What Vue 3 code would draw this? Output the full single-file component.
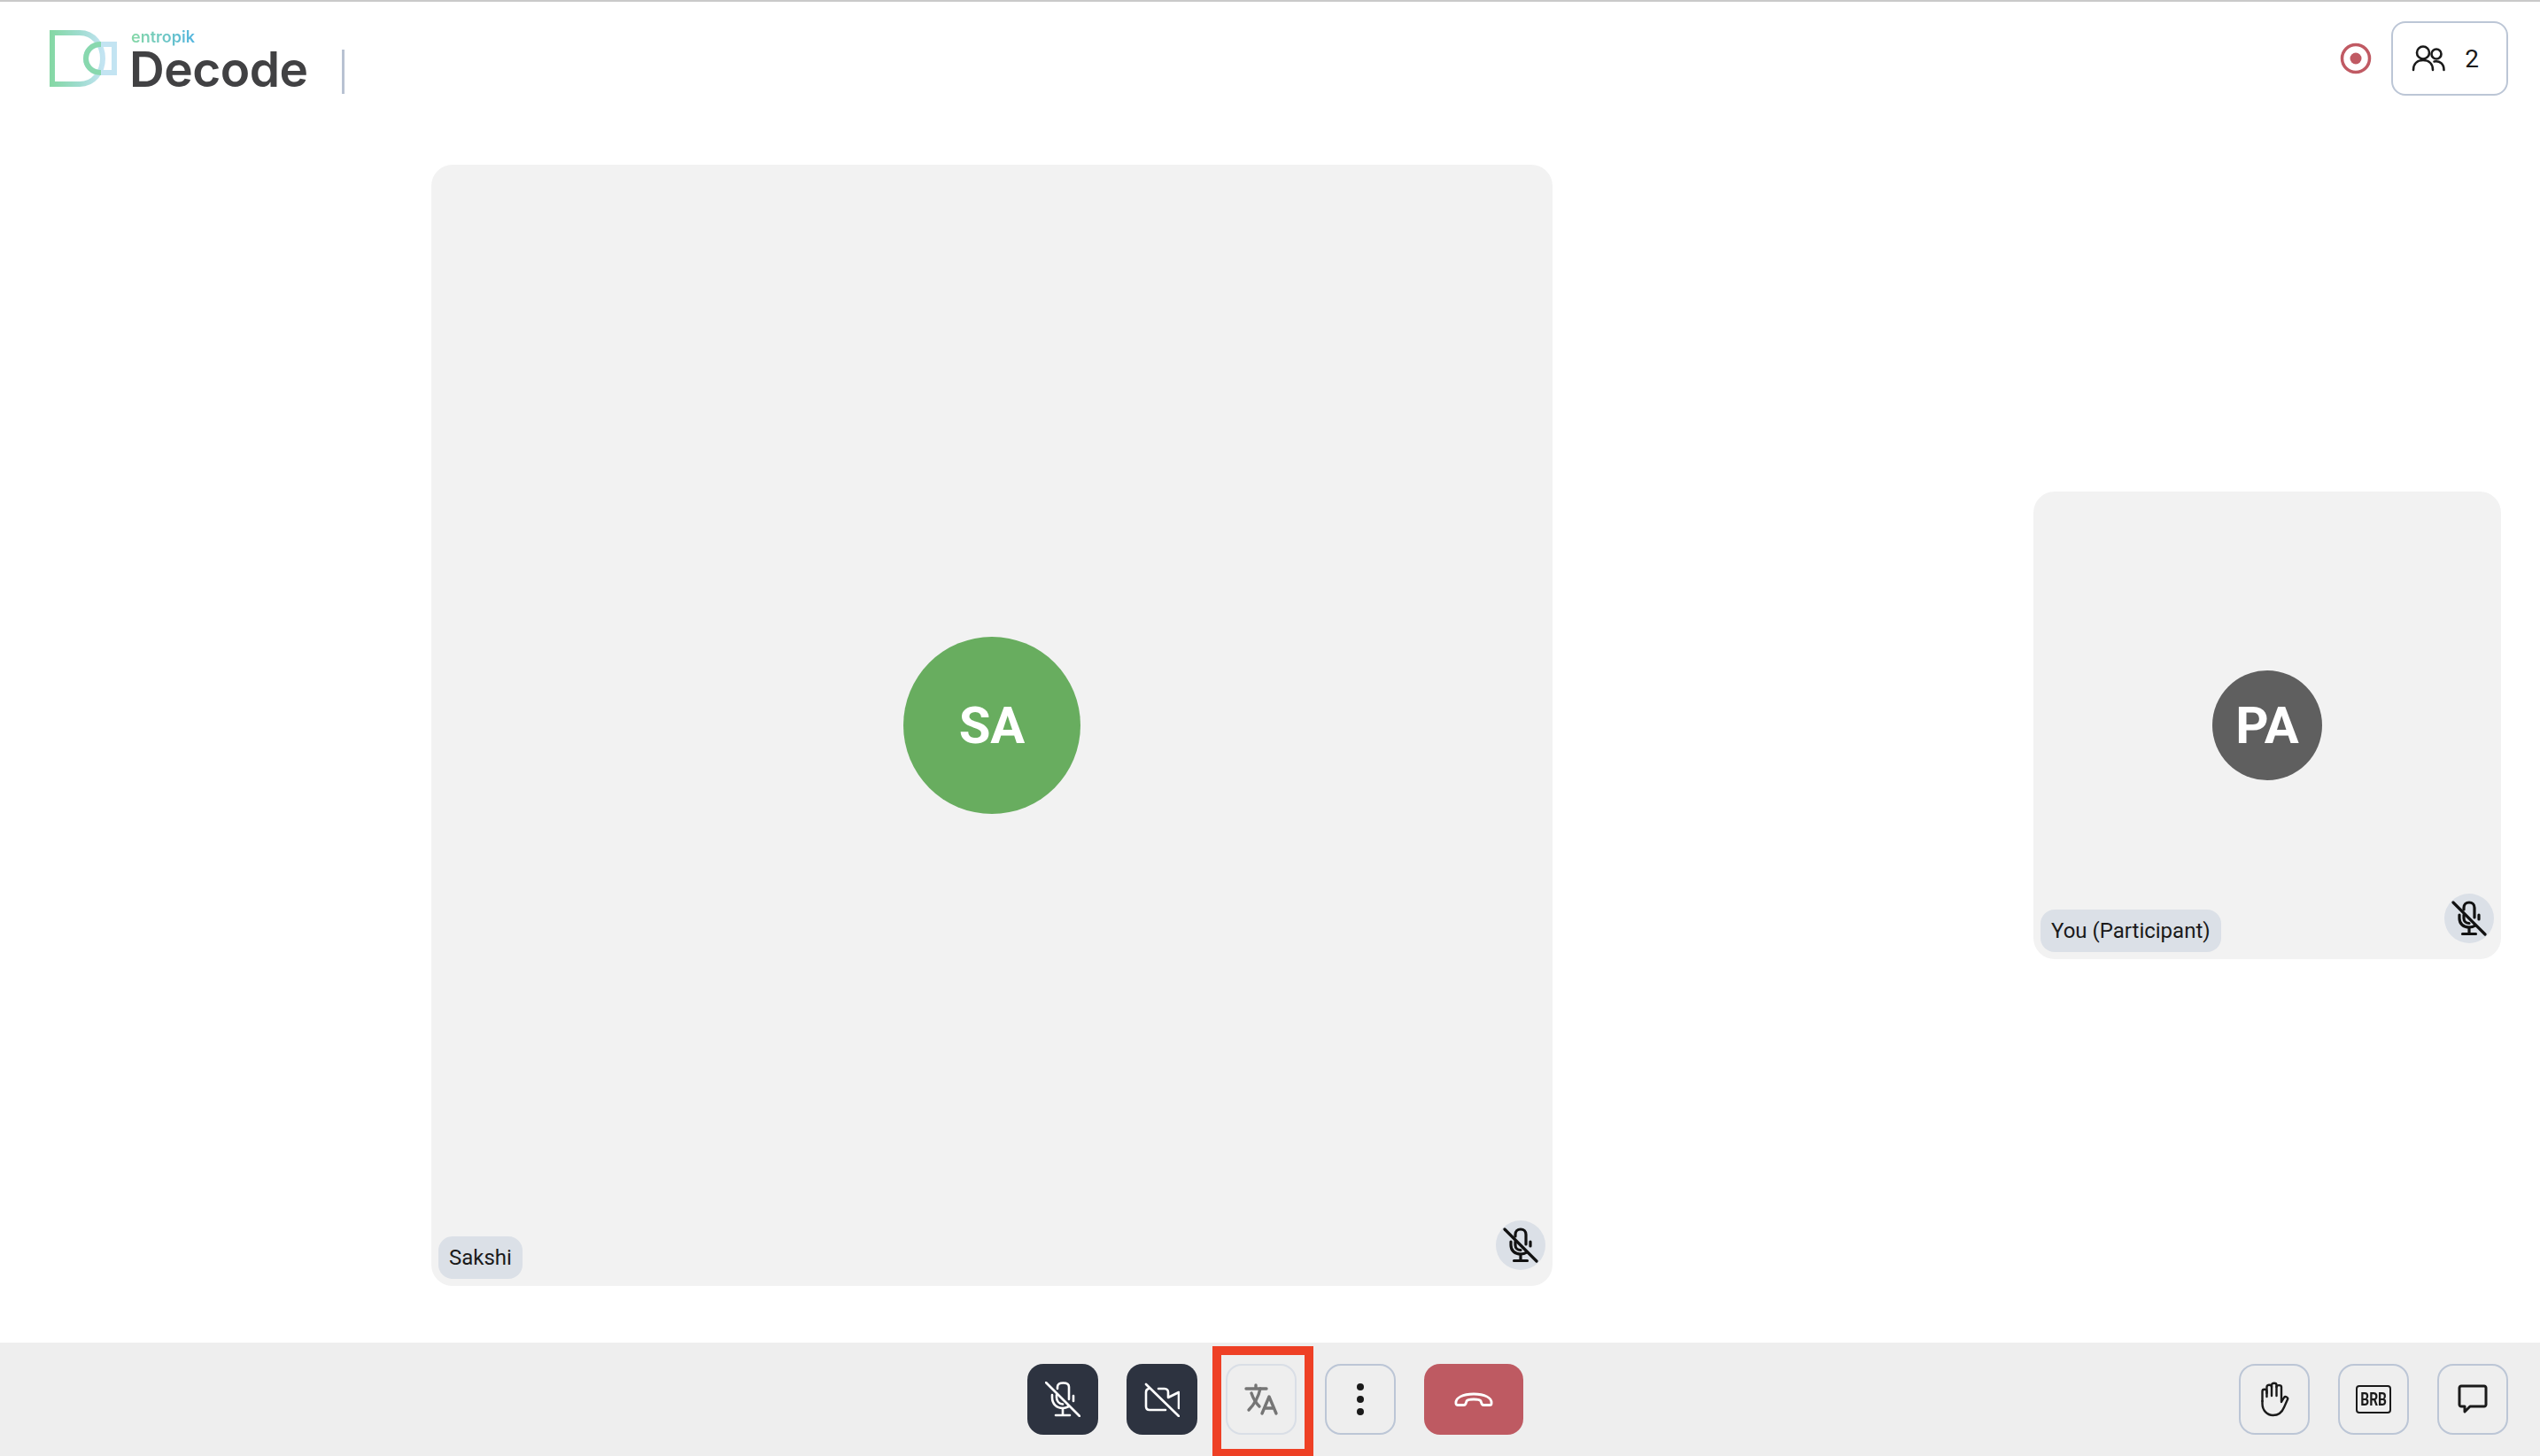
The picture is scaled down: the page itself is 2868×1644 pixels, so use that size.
<template>
  <div class="page">
    <header class="topbar">
      <div class="brand">
        <svg class="logo-mark" width="80" height="68" viewBox="0 0 80 68" fill="none">
          <defs>
            <linearGradient id="markGrad" x1="0" y1="0" x2="1" y2="0">
              <stop offset="0" stop-color="#86d8a6" />
              <stop offset="0.55" stop-color="#9fdcd0" />
              <stop offset="1" stop-color="#c3e4f2" />
            </linearGradient>
          </defs>
          <path d="M3 5H34C50 5 60 19 60 34S50 63 34 63H3Z" stroke="url(#markGrad)" stroke-width="6" />
          <path d="M73 18H58C47 18 41 26 41 34S47 50 58 50H73Z" stroke="#c3e4f2" stroke-width="6" />
          <path d="M58 18C47 18 41 26 41 34S47 50 58 50" stroke="#88d8ae" stroke-width="6" />
        </svg>
        <div class="brand-text">
          <span class="brand-parent">entropik</span>
          <span class="brand-name">Decode</span>
        </div>
        <span class="brand-divider"></span>
      </div>
      <div class="top-actions">
        <svg width="36" height="36" viewBox="0 0 36 36" fill="none">
          <circle cx="18" cy="18" r="15.5" stroke="#c05a63" stroke-width="3.5" />
          <circle cx="18" cy="18" r="6.5" fill="#c05a63" />
        </svg>
        <button class="people-btn">
          <svg width="38" height="32" viewBox="0 0 38 32" fill="none" stroke="#1a1a1a" stroke-width="2.6" stroke-linecap="round">
            <circle cx="13" cy="9.5" r="7" />
            <circle cx="28" cy="11" r="5.5" />
            <path d="M2 29C2 22 6.500 18 13 18S24 22 24 29" />
            <path d="M25.500 19.500C32 18.500 36.500 22 36.500 29" />
          </svg>
          <span>{{ participants.length }}</span>
        </button>
      </div>
    </header>

    <main class="stage">
      <div class="stage-main">
        <section class="tile tile-large">
          <div class="avatar avatar-large">{{ participants[0].initials }}</div>
          <span class="name-tag">{{ participants[0].name }}</span>
          <span class="mute-badge">
            <svg width="40" height="40" viewBox="0 0 40 40" fill="none" stroke="#111" stroke-width="3.2" stroke-linecap="round" stroke-linejoin="round">
              <path d="M14 10V8C14 4.500 16.500 2 20 2S26 4.500 26 8V19" />
              <path d="M31 16V21" />
              <path d="M9 16V20C9 26 13.500 30 20 30C23 30 25 29.300 27 28" />
              <path d="M14 16V20C14 23 16.500 25.500 20 25.500" />
              <path d="M20 30V37M12.500 37.500H27.500" />
              <path d="M2 2L38 38" />
            </svg>
          </span>
        </section>
      </div>
      <section class="tile tile-small">
        <div class="avatar avatar-small">{{ participants[1].initials }}</div>
        <span class="name-tag">{{ participants[1].name }}</span>
        <span class="mute-badge">
          <svg width="40" height="40" viewBox="0 0 40 40" fill="none" stroke="#111" stroke-width="3.2" stroke-linecap="round" stroke-linejoin="round">
            <path d="M14 10V8C14 4.500 16.500 2 20 2S26 4.500 26 8V19" />
            <path d="M31 16V21" />
            <path d="M9 16V20C9 26 13.500 30 20 30C23 30 25 29.300 27 28" />
            <path d="M14 16V20C14 23 16.500 25.500 20 25.500" />
            <path d="M20 30V37M12.500 37.500H27.500" />
            <path d="M2 2L38 38" />
          </svg>
        </span>
      </section>
    </main>

    <footer class="toolbar">
      <div class="controls">
        <button class="ctl ctl-dark">
          <svg width="40" height="40" viewBox="0 0 40 40" fill="none" stroke="#fff" stroke-width="2.600" stroke-linecap="round" stroke-linejoin="round">
            <path d="M14 8V6C14 3 16.500 1.500 20.500 1.500S27 3 27 6V20" />
            <path d="M32 16V22" />
            <path d="M8 15V18C8 25 13 30 20 30C23 30 25 29 27 28" />
            <path d="M13 15V18C13 22 16 25.500 20 25.500" />
            <path d="M20 30V37M12 38H28" />
            <path d="M1 1L39 39" />
          </svg>
        </button>
        <button class="ctl ctl-dark">
          <svg width="40" height="40" viewBox="0 0 40 40" fill="none" stroke="#fff" stroke-width="2.600" stroke-linecap="round" stroke-linejoin="round">
            <path d="M5 8C3 8.500 2 10 2 12V28C2 30.500 3.500 32 6 32H24" />
            <path d="M16 8H23C25.500 8 27 10 27 12V18L39 12V30" />
            <path d="M2 3L39 39" />
          </svg>
        </button>
        <button class="ctl ctl-outline ctl-faded">
          <svg width="40" height="40" viewBox="0 0 40 40" fill="none" stroke="#757575" stroke-width="3.400" stroke-linecap="round" stroke-linejoin="round">
            <path d="M3 8H26M14 4V8" />
            <path d="M19 8C17 17 12 26 6 32" />
            <path d="M9 13C11 19 14 24 18 28" />
            <path d="M21 36L29 17L37 36M23.500 30H34.500" />
          </svg>
        </button>
        <button class="ctl ctl-outline">
          <svg width="10" height="38" viewBox="0 0 10 38" fill="#1a1a1a">
            <circle cx="5" cy="5" r="4" />
            <circle cx="5" cy="19" r="4" />
            <circle cx="5" cy="33" r="4" />
          </svg>
        </button>
        <button class="ctl ctl-end">
          <svg width="44" height="16" viewBox="0 0 44 16" fill="none" stroke="#fff" stroke-width="2.800" stroke-linejoin="round">
            <path d="M2 13C1 6 10 2 22 2S43 6 42 13C42 14 41 14.500 40 14.500H33C32 14.500 31.500 14 31 13L30 10C29.500 9 28 8 22 8S14.500 9 14 10L13 13C12.500 14 12 14.500 11 14.500H4C3 14.500 2 14 2 13Z" />
          </svg>
        </button>
      </div>
      <div class="side-controls">
        <button class="ctl ctl-outline">
          <svg width="34" height="40" viewBox="0 0 34 40" fill="none" stroke="#1a1a1a" stroke-width="2.400" stroke-linecap="round" stroke-linejoin="round">
            <path d="M3.500 22V11C3.500 8 8.500 8 8.500 11V17" />
            <path d="M8.500 13V6C8.500 3 14 3 14 6V16" />
            <path d="M14 6V4C14 1 19.500 1 19.500 4V16" />
            <path d="M19.500 6C19.500 3.500 25 3.500 25 6V23L28 18C29.500 16 33 18 32 20L28 29C26 34 21.500 38 15.500 38C8.500 38 3.500 32 3.500 25V22" />
          </svg>
        </button>
        <button class="ctl ctl-outline">
          <span class="brb"><span class="brb-text">BRB</span></span>
        </button>
        <button class="ctl ctl-outline">
          <svg width="34" height="34" viewBox="0 0 34 34" fill="none" stroke="#1a1a1a" stroke-width="3" stroke-linejoin="round">
            <path d="M4 2H30C31 2 32 3 32 4V23C32 24 31 25 30 25H14L8 31V25H4C3 25 2 24 2 23V4C2 3 3 2 4 2Z" />
          </svg>
        </button>
      </div>
      <span class="highlight"></span>
    </footer>
  </div>
</template>

<script setup>
const participants = [
  { name: 'Sakshi', initials: 'SA' },
  { name: 'You (Participant)', initials: 'PA' },
]
</script>

<style>
html,
body {
  margin: 0;
  background: #fff;
}
</style>

<style scoped>
.page {
  width: 2868px;
  height: 1644px;
  display: flex;
  flex-direction: column;
  overflow: hidden;
  background: #fff;
  font-family: Roboto, "Liberation Sans", sans-serif;
  color: #1a1a1a;
}

.topbar {
  height: 120px;
  flex-shrink: 0;
  border-top: 2px solid #c9c9c9;
  display: flex;
  align-items: flex-start;
  justify-content: space-between;
  padding: 0 36px 0 56px;
}

.brand {
  display: flex;
  align-items: flex-start;
  padding-top: 28px;
}

.logo-mark {
  margin: 2px 10px 0 0;
}

.brand-text {
  display: flex;
  flex-direction: column;
}

.brand-parent {
  margin: 1px 0 0 2px;
  height: 22px;
  width: fit-content;
  font-family: Inter, sans-serif;
  font-size: 18px;
  line-height: 22px;
  font-weight: 600;
  background: linear-gradient(90deg, #86d8a6, #55b6e0);
  -webkit-background-clip: text;
  background-clip: text;
  color: transparent;
}

.brand-name {
  font-family: Inter, sans-serif;
  font-size: 55px;
  line-height: 50px;
  font-weight: 600;
  letter-spacing: -0.5px;
  color: #414143;
}

.brand-divider {
  width: 3px;
  height: 50px;
  margin: 26px 0 0 38px;
  background: #b8c2d2;
}

.top-actions {
  display: flex;
  align-items: center;
  gap: 22px;
  padding-top: 22px;
}

.people-btn {
  width: 132px;
  height: 84px;
  box-sizing: border-box;
  display: flex;
  align-items: center;
  justify-content: center;
  gap: 22px;
  background: #fff;
  border: 2px solid #bcc6d6;
  border-radius: 16px;
  font-family: Roboto, sans-serif;
  font-size: 28px;
  color: #1a1a1a;
  padding: 0 10px 0 0;
}

.stage {
  flex: 1;
  display: flex;
  align-items: center;
  gap: 56px;
  padding-right: 44px;
}

.stage-main {
  flex: 1;
  display: flex;
  justify-content: center;
}

.tile {
  position: relative;
  display: flex;
  align-items: center;
  justify-content: center;
  flex-shrink: 0;
  background: #f2f2f2;
  border-radius: 24px;
}

.tile-large {
  width: 1266px;
  height: 1266px;
}

.tile-small {
  width: 528px;
  height: 528px;
}

.avatar {
  display: flex;
  align-items: center;
  justify-content: center;
  border-radius: 50%;
  color: #fff;
  font-family: Roboto, sans-serif;
  font-weight: 700;
  font-size: 58px;
}

.avatar-large {
  width: 200px;
  height: 200px;
  background: #68ad5f;
}

.avatar-small {
  width: 124px;
  height: 124px;
  background: #5f5f5f;
}

.name-tag {
  position: absolute;
  left: 8px;
  bottom: 8px;
  height: 48px;
  display: flex;
  align-items: center;
  padding: 0 12px;
  border-radius: 16px;
  background: #dbe0e7;
  font-size: 24px;
  color: #1a1a1a;
}

.mute-badge {
  position: absolute;
  right: 8px;
  bottom: 18px;
  width: 56px;
  height: 56px;
  display: flex;
  align-items: center;
  justify-content: center;
  border-radius: 50%;
  background: #dbe0e7;
}

.toolbar {
  position: relative;
  height: 128px;
  flex-shrink: 0;
  display: flex;
  align-items: center;
  justify-content: center;
  padding: 0 36px 0 1160px;
  box-sizing: border-box;
  background: #eee;
}

.controls {
  display: flex;
  gap: 32px;
}

.side-controls {
  display: flex;
  gap: 32px;
  margin-left: auto;
}

.ctl {
  width: 80px;
  height: 80px;
  box-sizing: border-box;
  display: flex;
  align-items: center;
  justify-content: center;
  padding: 0;
  border-radius: 18px;
  border: 0;
}

.ctl-dark {
  background: #2d3340;
}

.ctl-outline {
  background: transparent;
  border: 2px solid #bcc6d6;
}

.ctl-faded {
  border-color: #d9dee6;
}

.ctl-end {
  width: 112px;
  background: #be5a62;
}

.brb {
  width: 40px;
  height: 32px;
  box-sizing: border-box;
  display: flex;
  align-items: center;
  justify-content: center;
  border: 2.500px solid #1a1a1a;
  border-radius: 4px;
}

.brb-text {
  font-family: Roboto, sans-serif;
  font-size: 21px;
  font-weight: 700;
  color: #1a1a1a;
  transform: scaleX(0.74);
}

.highlight {
  position: absolute;
  left: 1369px;
  top: 4px;
  width: 114px;
  height: 124px;
  box-sizing: border-box;
  border: 10px solid #ee4025;
  border-bottom-width: 8px;
}
</style>
